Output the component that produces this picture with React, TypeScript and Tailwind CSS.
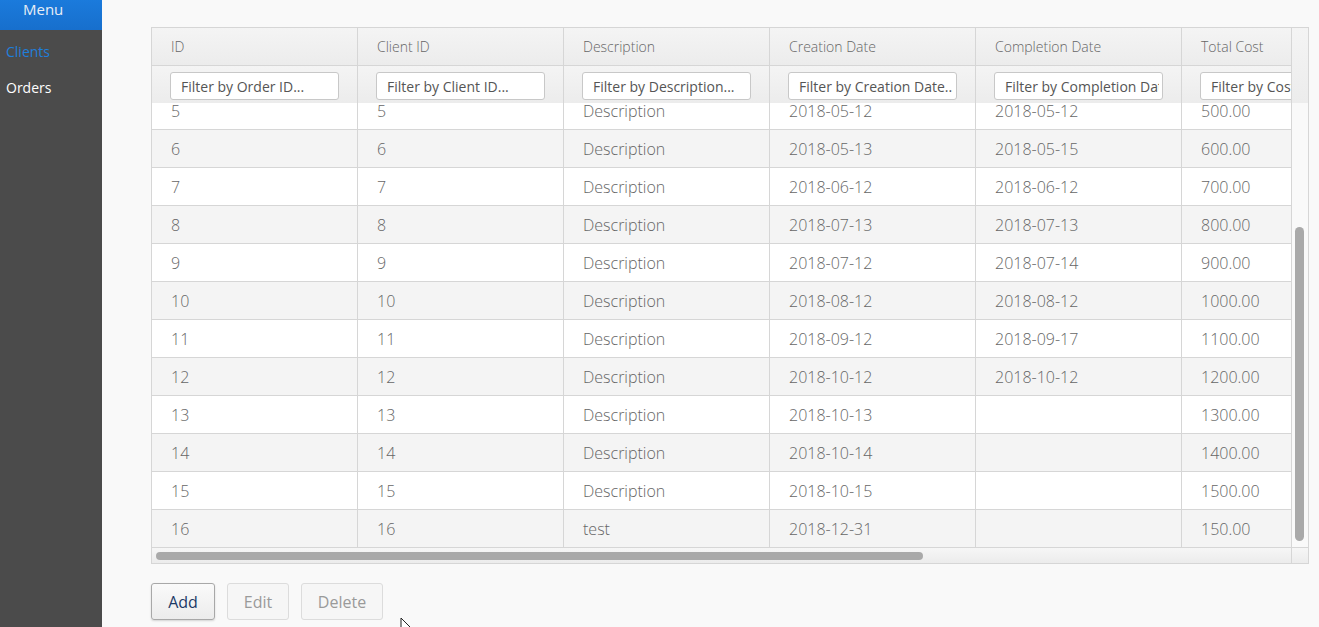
import React from "react";

type Order = {
  id: string;
  client: string;
  desc: string;
  created: string;
  completed: string;
  cost: string;
};

const orders: Order[] = [
  { id: "5", client: "5", desc: "Description", created: "2018-05-12", completed: "2018-05-12", cost: "500.00" },
  { id: "6", client: "6", desc: "Description", created: "2018-05-13", completed: "2018-05-15", cost: "600.00" },
  { id: "7", client: "7", desc: "Description", created: "2018-06-12", completed: "2018-06-12", cost: "700.00" },
  { id: "8", client: "8", desc: "Description", created: "2018-07-13", completed: "2018-07-13", cost: "800.00" },
  { id: "9", client: "9", desc: "Description", created: "2018-07-12", completed: "2018-07-14", cost: "900.00" },
  { id: "10", client: "10", desc: "Description", created: "2018-08-12", completed: "2018-08-12", cost: "1000.00" },
  { id: "11", client: "11", desc: "Description", created: "2018-09-12", completed: "2018-09-17", cost: "1100.00" },
  { id: "12", client: "12", desc: "Description", created: "2018-10-12", completed: "2018-10-12", cost: "1200.00" },
  { id: "13", client: "13", desc: "Description", created: "2018-10-13", completed: "", cost: "1300.00" },
  { id: "14", client: "14", desc: "Description", created: "2018-10-14", completed: "", cost: "1400.00" },
  { id: "15", client: "15", desc: "Description", created: "2018-10-15", completed: "", cost: "1500.00" },
  { id: "16", client: "16", desc: "test", created: "2018-12-31", completed: "", cost: "150.00" },
];

const columns = [
  { title: "ID", filter: "Filter by Order ID..." },
  { title: "Client ID", filter: "Filter by Client ID..." },
  { title: "Description", filter: "Filter by Description..." },
  { title: "Creation Date", filter: "Filter by Creation Date..." },
  { title: "Completion Date", filter: "Filter by Completion Date..." },
  { title: "Total Cost", filter: "Filter by Cost..." },
];

const Cell = ({ children, last }: { children?: React.ReactNode; last?: boolean }) => (
  <div
    className={`w-[206px] shrink-0 h-full flex items-center pl-[19px] ${
      last ? "" : "border-r border-[#d6d6d6]"
    }`}
  >
    {children}
  </div>
);

const App = () => {
  return (
    <div
      className="flex w-[1319px] h-[627px] overflow-hidden bg-[#f9f9f9] relative"
      style={{ fontFamily: '"Open Sans", "Liberation Sans", sans-serif' }}
    >
      {/* sidebar */}
      <aside className="w-[102px] shrink-0 bg-[#4b4b4b] flex flex-col">
        <div className="h-[31px] bg-gradient-to-b from-[#1b7bdc] to-[#176fcd] text-[#e8eef6] text-[15px] leading-[20px] pl-[23px] -mt-[1px]">
          Menu
        </div>
        <div className="text-[#1f7fdc] text-[14px] pl-[6px] mt-[12px] leading-[20px]">Clients</div>
        <div className="text-white text-[14px] pl-[6px] mt-[16px] leading-[20px]">Orders</div>
      </aside>

      {/* main */}
      <main className="flex-1 pl-[49px] pt-[27px]">
        <div className="w-[1158px] h-[537px] border border-[#d6d6d6] bg-white flex flex-col">
          <div className="flex flex-1 min-h-0">
            {/* table area */}
            <div className="w-[1139px] flex flex-col overflow-hidden">
              {/* header titles */}
              <div className="h-[38px] shrink-0 flex bg-gradient-to-b from-[#f4f4f4] to-[#ececec] border-b border-[#d6d6d6] text-[14px] font-light text-[#666]">
                {columns.map((c, i) => (
                  <Cell key={c.title} last={i === columns.length - 1}>
                    {c.title}
                  </Cell>
                ))}
              </div>
              {/* filter row */}
              <div className="h-[37px] shrink-0 flex bg-gradient-to-b from-[#f4f4f4] to-[#ececec] relative z-10">
                {columns.map((c, i) => (
                  <div
                    key={c.title}
                    className={`w-[206px] shrink-0 h-full pt-[6px] pl-[18px] ${
                      i === columns.length - 1 ? "" : "border-r border-[#d6d6d6]"
                    }`}
                  >
                    <input
                      readOnly
                      placeholder={c.filter}
                      className="w-[169px] h-[28px] rounded-[3px] border border-[#c8c8c8] bg-white pl-[10px] pr-[3px] text-[14px] text-[#555] placeholder:text-[#555] outline-none"
                    />
                  </div>
                ))}
              </div>
              {/* body */}
              <div className="flex-1 min-h-0 overflow-hidden">
                <div className="-mt-[11px]">
                  {orders.map((o, i) => (
                    <div
                      key={o.id}
                      className={`h-[38px] flex border-b border-[#d6d6d6] text-[16px] font-light text-[#666] ${
                        i % 2 === 0 ? "bg-white" : "bg-[#f4f4f4]"
                      }`}
                    >
                      <Cell>{o.id}</Cell>
                      <Cell>{o.client}</Cell>
                      <Cell>{o.desc}</Cell>
                      <Cell>{o.created}</Cell>
                      <Cell>{o.completed}</Cell>
                      <Cell last>{o.cost}</Cell>
                    </div>
                  ))}
                </div>
              </div>
            </div>
            {/* vertical scrollbar */}
            <div className="w-[17px] border-l border-[#d6d6d6] bg-[#f9f9f9] flex flex-col">
              <div className="h-[75px] bg-gradient-to-b from-[#f4f4f4] to-[#ececec]" />
              <div className="flex-1 relative">
                <div className="absolute left-[3px] top-[124px] w-[9px] h-[314px] rounded-full bg-[#a9a9a9]" />
              </div>
            </div>
          </div>
          {/* horizontal scrollbar */}
          <div className="h-[16px] shrink-0 flex border-t border-[#d6d6d6] bg-gradient-to-b from-[#f6f6f6] to-[#ececec]">
            <div className="w-[1139px] flex items-center pl-[4px]">
              <div className="w-[767px] h-[8px] rounded-full bg-[#a9a9a9]" />
            </div>
            <div className="w-[17px] border-l border-[#d6d6d6]" />
          </div>
        </div>

        {/* buttons */}
        <div className="flex gap-[12px] mt-[19px]">
          <button className="w-[64px] h-[37px] rounded-[3px] border border-[#a8a8a8] bg-gradient-to-b from-[#fafafa] to-[#ececec] text-[16px] text-[#1c3a66] shadow-[0_1px_2px_rgba(0,0,0,0.15)]">
            Add
          </button>
          <button className="w-[62px] h-[37px] rounded-[3px] border border-[#dcdcdc] bg-[#f6f6f6] text-[16px] text-[#9a9a9a]">
            Edit
          </button>
          <button className="w-[82px] h-[37px] rounded-[3px] border border-[#dcdcdc] bg-[#f6f6f6] text-[16px] text-[#9a9a9a]">
            Delete
          </button>
        </div>
      </main>

      {/* mouse pointer */}
      <svg className="absolute left-[400px] top-[617px]" width="14" height="20" viewBox="0 0 14 20">
        <path d="M1 1 L1 16 L4.5 12.5 L7 18 L9 17 L6.5 11.5 L11.5 11.5 Z" fill="#fff" stroke="#222" strokeWidth="1" />
      </svg>
    </div>
  );
};

export default App;
